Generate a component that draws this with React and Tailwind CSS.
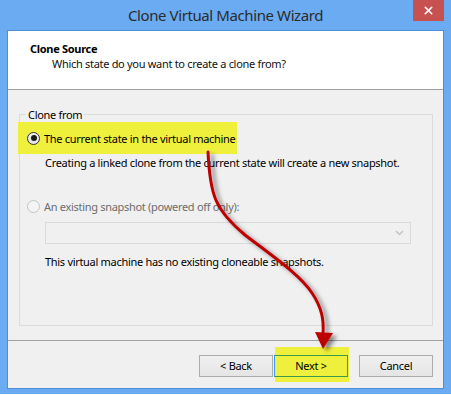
import { FiX } from "react-icons/fi";

const Radio = ({ checked, disabled }) => (
  <span
    className={
      "flex items-center justify-center w-[13px] h-[13px] rounded-full border shrink-0 " +
      (disabled
        ? "border-[#c4c4c4] bg-[#f4f4f4]"
        : "border-[#333333] bg-gradient-to-b from-[#f4f4f4] to-[#e2e2e2]")
    }
  >
    {checked && <span className="w-[6px] h-[6px] rounded-full bg-[#1a1a1a]" />}
  </span>
);

const Button = ({ children }) => (
  <button className="w-[74px] h-[22px] border border-[#acacac] bg-gradient-to-b from-[#f0f0f0] to-[#e5e5e5] text-[11px] leading-[20px] text-[#000]">
    {children}
  </button>
);

const Arrow = () => (
  <svg
    className="absolute inset-0 pointer-events-none"
    width="451"
    height="395"
    viewBox="0 0 451 395"
  >
    <defs>
      <filter id="sh" x="-20%" y="-20%" width="140%" height="140%">
        <feDropShadow dx="4" dy="3" stdDeviation="2" floodColor="#000" floodOpacity="0.45" />
      </filter>
    </defs>
    <g filter="url(#sh)">
      <path
        d="M208,152 C210,195 215,210 245,235 C275,258 300,275 312,293 C322,308 324,320 323,334"
        fill="none"
        stroke="#bd0000"
        strokeWidth="3"
        strokeLinecap="round"
      />
      <path d="M315,332 L333,333 L323,349 Z" fill="#bd0000" />
    </g>
  </svg>
);

export default function App() {
  return (
    <div className="relative w-[451px] h-[395px] bg-white font-['Noto_Sans',sans-serif] tracking-[-0.3px] text-black">
      <div className="flex flex-col w-[451px] h-[394px] bg-[#6aabf2] px-[7px]">
        {/* Title bar */}
        <div className="relative h-[30px] shrink-0 flex items-center justify-center">
          <span className="text-[15px] tracking-[-0.4px] leading-[20px] text-[#2b2b2b] pb-[1px]">
            Clone Virtual Machine Wizard
          </span>
          <div className="absolute right-0 top-0 w-[31px] h-[21px] bg-[#c75050] flex items-center justify-center text-white">
            <FiX size={13} strokeWidth={3} />
          </div>
        </div>

        {/* Panel */}
        <div className="flex flex-col border border-[#4d8ed8] bg-[#f0f0f0] h-[359px]">
          <div className="h-[59px] shrink-0 bg-white border-b border-[#a0a0a0] pl-[22px] pt-[10px] text-[11px] leading-[15px]">
            <div className="font-bold">Clone Source</div>
            <div className="pl-[22px] text-[#111]">
              Which state do you want to create a clone from?
            </div>
          </div>

          <div className="flex flex-col flex-1 text-[11px] leading-[15px]">
            {/* Group box */}
            <div className="relative mt-[24px] ml-[11px] w-[414px] h-[212px] border border-[#dcdcdc]">
              <span className="absolute left-[6px] -top-[8px] px-[2px] bg-[#f0f0f0] leading-[15px]">
                Clone from
              </span>
              <div className="mt-[7px] -ml-[2px] w-[219px] h-[32px] bg-[#eff03c] flex items-center gap-[4px] pl-[9px] whitespace-nowrap">
                <Radio checked />
                <span>The current state in the virtual machine</span>
              </div>
              <div className="mt-[1px] pl-[25px] whitespace-nowrap">
                Creating a linked clone from the current state will create a new snapshot.
              </div>
              <div className="mt-[29px] pl-[7px] flex items-center gap-[4px] text-[#6d6d6d] whitespace-nowrap">
                <Radio disabled />
                <span>An existing snapshot (powered off only):</span>
              </div>
              <div className="mt-[8px] ml-[25px] w-[366px] h-[22px] border border-[#d9d9d9] bg-[#f0f0f0] flex items-center justify-end pr-[6px]">
                <svg width="9" height="6" viewBox="0 0 9 6">
                  <path d="M1 1 L4.5 4.5 L8 1" fill="none" stroke="#c4c4c4" strokeWidth="1.5" />
                </svg>
              </div>
              <div className="mt-[10px] pl-[25px] whitespace-nowrap">
                This virtual machine has no existing cloneable snapshots.
              </div>
            </div>

            <div className="mt-[14px] h-px bg-[#a0a0a0]" />

            {/* Buttons */}
            <div className="mt-[14px] flex justify-end pr-[10px]">
              <Button>&lt; Back</Button>
              <div className="relative ml-[1px] w-[74px] h-[22px]">
                <span className="absolute left-[1px] -right-[1px] -top-[8px] -bottom-[5px] bg-[#eff03c]" />
                <button className="relative w-[74px] h-[22px] border border-[#3a9a48] border-l-[#3399ff] text-[11px] leading-[20px]">
                  Next &gt;
                </button>
              </div>
              <div className="ml-[11px]">
                <Button>Cancel</Button>
              </div>
            </div>
          </div>
        </div>
      </div>
      <Arrow />
    </div>
  );
}
